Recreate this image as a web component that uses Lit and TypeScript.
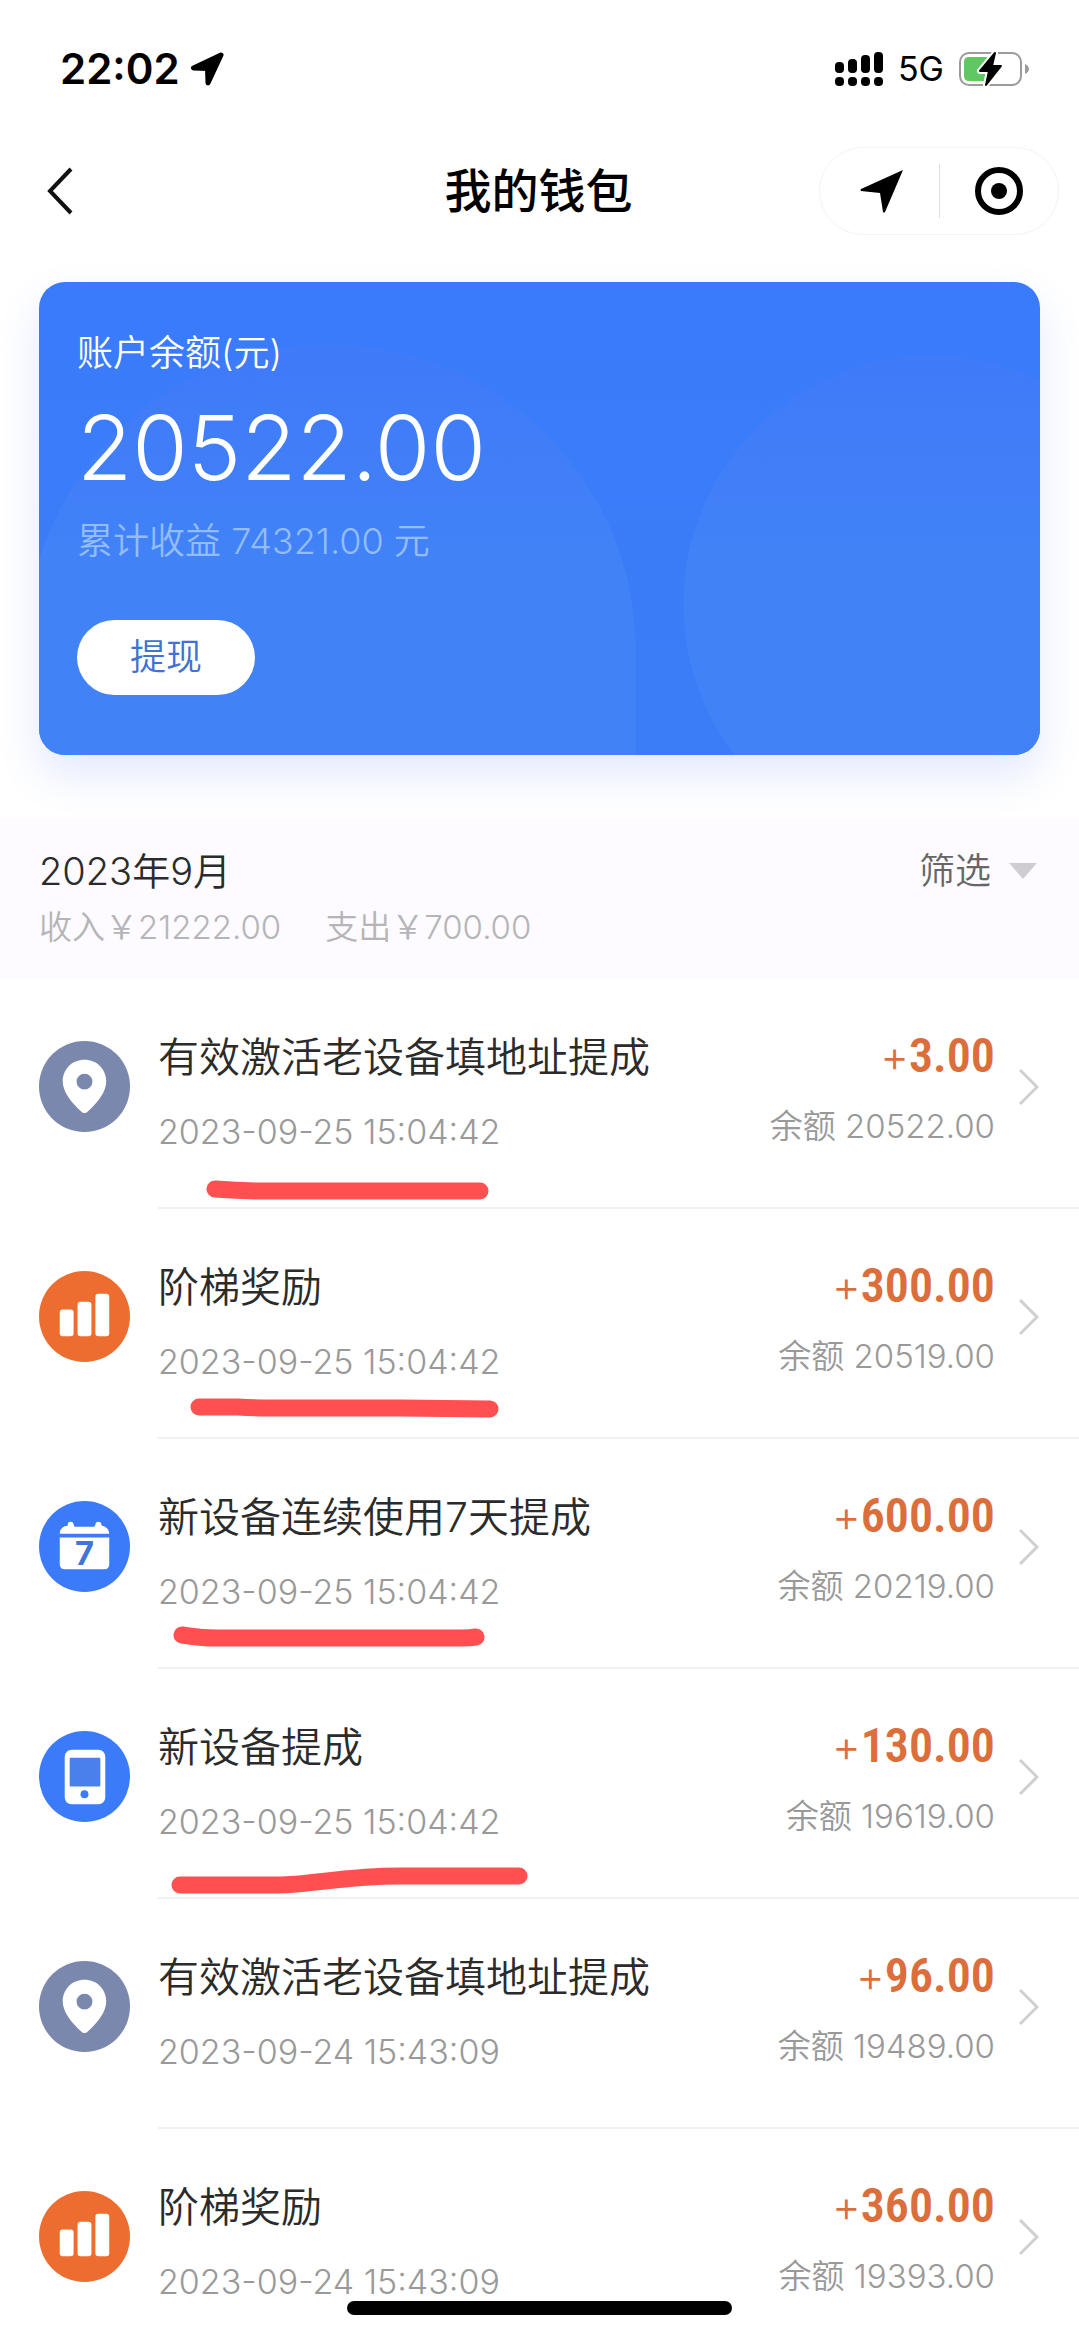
import { LitElement, html, css, svg, nothing } from "lit";
import { customElement, property } from "lit/decorators.js";

type Kind = "pin" | "bars" | "calendar" | "phone";

interface Entry {
  kind: Kind;
  title: string;
  time: string;
  amount: string;
  balance: string;
  mark?: string;
}

const ENTRIES: Entry[] = [
  { kind: "pin", title: "有效激活老设备填地址提成", time: "2023-09-25 15:04:42", amount: "3.00", balance: "20522.00", mark: "M215 210 Q240 212 262 212 L480 212" },
  { kind: "bars", title: "阶梯奖励", time: "2023-09-25 15:04:42", amount: "300.00", balance: "20519.00", mark: "M199 198 L238 198 Q255 199 285 199 L400 199 L490 200" },
  { kind: "calendar", title: "新设备连续使用7天提成", time: "2023-09-25 15:04:42", amount: "600.00", balance: "20219.00", mark: "M182 196 Q200 199 216 199 L462 199 Q470 199 476 198" },
  { kind: "phone", title: "新设备提成", time: "2023-09-25 15:04:42", amount: "130.00", balance: "19619.00", mark: "M180 216 L278 216 C310 216 345 207 400 207 L519 207" },
  { kind: "pin", title: "有效激活老设备填地址提成", time: "2023-09-24 15:43:09", amount: "96.00", balance: "19489.00" },
  { kind: "bars", title: "阶梯奖励", time: "2023-09-24 15:43:09", amount: "360.00", balance: "19393.00" },
];

@customElement("entry-icon")
export class EntryIcon extends LitElement {
  @property() kind: Kind = "pin";

  static styles = css`
    :host { display: block; flex: none; width: 91px; height: 91px; }
    .art { display: block; width: 100%; height: 100%; }
    .day { font: 700 33px "Inter", sans-serif; }
  `;

  private shape() {
    switch (this.kind) {
      case "pin":
        return svg`
          <circle cx="46" cy="46" r="46" fill="#7b88ad"></circle>
          <path fill="#fff" fill-rule="evenodd" d="M46 19 C58.500 19 68 28.500 68 41 C68 51 60 62 48.500 72 Q46 73.800 43.500 72 C32 62 24 51 24 41 C24 28.500 33.500 19 46 19 Z M46 33 A8 8 0 1 0 46 49 A8 8 0 1 0 46 33 Z"></path>`;
      case "bars":
        return svg`
          <circle cx="46" cy="46" r="46" fill="#ed6c30"></circle>
          <g fill="#fff">
            <rect x="21" y="39" width="14" height="27" rx="3"></rect>
            <rect x="39" y="31" width="14" height="35" rx="3"></rect>
            <rect x="57" y="23" width="14" height="43" rx="3"></rect>
          </g>`;
      case "calendar":
        return svg`
          <circle cx="46" cy="46" r="46" fill="#3b7bfa"></circle>
          <path fill="#fff" d="M21 33 C21 28 25 25 29 25 L29 24 Q29 21 32 21 Q35 21 35 24 L36 26 L56 26 L57 24 Q57 21 60 21 Q63 21 63 24 L64 25 C68 26 71 29 71 33 Z"></path>
          <path fill="#fff" d="M21 37 H71 V64 Q71 69 66 69 H26 Q21 69 21 64 Z"></path>
          <text class="day" x="46" y="65" text-anchor="middle" fill="#3f76d8">7</text>`;
      default:
        return svg`
          <circle cx="46" cy="46" r="46" fill="#3b7bfa"></circle>
          <rect x="26" y="19" width="41" height="55" rx="7" fill="#fff"></rect>
          <rect x="31" y="27" width="31" height="29" rx="1" fill="#4a80ec"></rect>
          <circle cx="46" cy="64" r="4" fill="#3b7bfa"></circle>`;
    }
  }

  render() {
    return html`<svg class="art" viewBox="0 0 92 92" aria-hidden="true">${this.shape()}</svg>`;
  }
}

@customElement("app-root")
export class AppRoot extends LitElement {
  static styles = css`
    :host {
      display: flex;
      flex-direction: column;
      height: 100vh;
      overflow: hidden;
      background: #fff;
      color: #2b2b2b;
      font-family: "Inter", "Noto Sans CJK SC", sans-serif;
      font-weight: 350;
    }
    * { box-sizing: border-box; }
    button { font: inherit; color: inherit; border: 0; background: none; padding: 0; }
    svg { display: block; flex: none; }
    p, h1, h2, ul { margin: 0; padding: 0; }

    .status { flex: none; display: flex; align-items: center; height: 138px; padding: 0 50px 0 60px; color: #000; }
    .clock { font-weight: 600; font-size: 42px; line-height: 48px; }
    .here { margin-left: 10px; }
    .signals { margin-left: auto; display: flex; align-items: center; gap: 15px; font-size: 34px; font-weight: 400; line-height: 40px; }

    .nav { flex: none; display: grid; grid-template-columns: 1fr auto 1fr; align-items: center; height: 106px; padding: 0 20px 0 18px; }
    .back { justify-self: start; margin-left: 28px; width: 48px; height: 64px; }
    .name { font-size: 47px; line-height: 64px; font-weight: 500; color: #000; }
    .capsule { justify-self: end; display: flex; align-items: center; width: 240px; height: 88px; border: 1px solid #f3f3f3; border-radius: 44px; }
    .tool { flex: 1; display: flex; justify-content: center; align-items: center; height: 54px; }
    .tool + .tool { border-left: 1px solid #dedede; }

    .card { position: relative; flex: none; margin: 38px 39px 0 39px; padding: 48px 38px 60px; border-radius: 26px; color: #fff; background: linear-gradient(#397bfb, #3b7df6); box-shadow: 0 20px 44px rgba(60, 100, 250, 0.14); }
    .waves { position: absolute; inset: 0; width: 100%; height: 100%; border-radius: 26px; }
    .inner { position: relative; display: flex; flex-direction: column; align-items: flex-start; }
    .label { font-size: 36px; line-height: 46px; }
    .total { font-size: 90px; line-height: 112px; margin-top: 16px; font-weight: 300; }
    .earned { font-size: 36px; line-height: 46px; margin-top: 14px; color: #93bcfa; }
    .withdraw { margin-top: 56px; width: 178px; height: 75px; border-radius: 38px; background: #fff; color: #3f72d2; font-size: 36px; line-height: 75px; }

    .month { flex: none; display: flex; align-items: flex-start; justify-content: space-between; margin-top: 63px; padding: 30px 42px 0 39px; height: 161px; background: #fdfbff; }
    .date { font-size: 38px; line-height: 46px; font-weight: 350; }
    .sums { display: flex; gap: 44px; margin-top: 10px; font-size: 33px; line-height: 46px; color: #b5b5b8; }
    .filter { display: flex; align-items: center; gap: 18px; font-size: 36px; line-height: 46px; color: #666; }

    .list { flex: 1; min-height: 0; overflow: hidden; list-style: none; }
    .row { position: relative; display: flex; height: 230px; padding-left: 39px; gap: 28px; color: inherit; text-decoration: none; }
    .icon { margin-top: 62px; }
    .body { flex: 1; display: flex; justify-content: space-between; padding: 49px 40px 0 0; border-bottom: 2px solid #f1f1f1; }
    .title { font-size: 41px; line-height: 58px; }
    .time { font-size: 34px; line-height: 46px; margin-top: 23px; color: #999; }
    .right { margin-left: auto; text-align: right; }
    .amount { font-family: "Roboto Condensed", "Liberation Sans Narrow", "Roboto", sans-serif; font-weight: 600; font-size: 48px; line-height: 56px; color: #dc6e3c; }
    .plus { font-family: "Inter", sans-serif; font-weight: 350; font-size: 44px; }
    .balance { font-size: 33px; line-height: 46px; margin-top: 19px; color: #999; }
    .go { margin: 40px 0 0 24px; }
    .mark { position: absolute; left: 0; top: 0; width: 100%; height: 100%; overflow: visible; fill: none; stroke: #ff4f50; stroke-width: 17px; stroke-linecap: round; stroke-linejoin: round; }

    .home { position: fixed; left: 0; right: 0; bottom: 22px; margin: 0 auto; width: 385px; height: 14px; border-radius: 7px; background: #000; }
  `;

  private row(e: Entry) {
    return html`
      <li>
        <a class="row" href="#">
          <entry-icon class="icon" .kind=${e.kind}></entry-icon>
          <div class="body">
            <div>
              <p class="title">${e.title}</p>
              <p class="time">${e.time}</p>
            </div>
            <div class="right">
              <p class="amount"><span class="plus">+</span>${e.amount}</p>
              <p class="balance">余额 ${e.balance}</p>
            </div>
            <svg class="go" width="20" height="38" viewBox="0 0 20 38" fill="none" stroke="#cfcfcf" stroke-width="3" aria-hidden="true"><path d="M1 2 L18 19 L1 36"></path></svg>
          </div>
          ${e.mark ? html`<svg class="mark" aria-hidden="true"><path d=${e.mark}></path></svg>` : nothing}
        </a>
      </li>`;
  }

  render() {
    return html`
      <div class="status">
        <span class="clock">22:02</span>
        <svg class="here" width="34" height="34" viewBox="0 0 34 34" aria-hidden="true"><path d="M31 3 L3.500 16 L17.500 16.500 L18 31 Z" fill="#000" stroke="#000" stroke-width="5" stroke-linejoin="round"></path></svg>
        <div class="signals">
          <svg width="48" height="36" viewBox="0 0 48 36" aria-hidden="true">
            <rect x="0" y="11" width="9" height="11" rx="4"></rect><rect x="13" y="8" width="9" height="14" rx="4"></rect>
            <rect x="26" y="4" width="9" height="18" rx="4"></rect><rect x="39" y="1" width="9" height="21" rx="4"></rect>
            <rect x="0" y="26" width="9" height="9" rx="4"></rect><rect x="13" y="26" width="9" height="9" rx="4"></rect>
            <rect x="26" y="26" width="9" height="9" rx="4"></rect><rect x="39" y="26" width="9" height="9" rx="4"></rect>
          </svg>
          <span>5G</span>
          <svg width="70" height="36" viewBox="0 0 70 36" aria-hidden="true">
            <rect x="1" y="2" width="61" height="32" rx="9" fill="none" stroke="#9b9b9b" stroke-width="2"></rect>
            <path d="M66 13 Q70 15 70 18 Q70 21 66 23 Z" fill="#9b9b9b"></path>
            <path d="M10 6 H34 V30 H10 Q5 30 5 25 V11 Q5 6 10 6 Z" fill="#5fc863"></path>
            <path d="M36 2 L21 20 H30 L27 34 L42 15 H33 Z" fill="#000" stroke="#fff" stroke-width="6" stroke-linejoin="round"></path>
            <path d="M36 2 L21 20 H30 L27 34 L42 15 H33 Z" fill="#000" stroke="#000" stroke-width="2" stroke-linejoin="round"></path>
          </svg>
        </div>
      </div>

      <header class="nav">
        <button class="back" aria-label="返回">
          <svg width="28" height="48" viewBox="0 0 28 48" fill="none" stroke="#111" stroke-width="4"><path d="M25 2 L4 24 L25 46"></path></svg>
        </button>
        <h1 class="name">我的钱包</h1>
        <div class="capsule">
          <button class="tool" aria-label="位置">
            <svg width="50" height="44" viewBox="-6 0 50 44"><path d="M43 1 L1 20 Q0 21 1 22 L20 24 L23 43 Q24 44 25 43 Z"></path></svg>
          </button>
          <button class="tool" aria-label="关闭">
            <svg width="48" height="48" viewBox="0 0 48 48"><circle cx="24" cy="24" r="21" fill="none" stroke="#000" stroke-width="6"></circle><circle cx="24" cy="24" r="8"></circle></svg>
          </button>
        </div>
      </header>

      <section class="card">
        <svg class="waves" viewBox="0 0 1002 473" preserveAspectRatio="xMidYMid slice" aria-hidden="true">
          <defs><linearGradient id="tint" gradientUnits="userSpaceOnUse" x1="0" y1="60" x2="0" y2="473"><stop offset="0" stop-color="#437af8" stop-opacity="0.6"></stop><stop offset="0.500" stop-color="#4182f7"></stop><stop offset="1" stop-color="#4183f7"></stop></linearGradient></defs>
          <path d="M-13 473 V368 A305 305 0 0 1 597 368 V473 Z" fill="url(#tint)"></path>
          <circle cx="893" cy="322" r="248" fill="url(#tint)"></circle>
        </svg>
        <div class="inner">
          <p class="label">账户余额(元)</p>
          <p class="total">20522.00</p>
          <p class="earned">累计收益 74321.00 元</p>
          <button class="withdraw">提现</button>
        </div>
      </section>

      <section class="month">
        <div>
          <h2 class="date">2023年9月</h2>
          <p class="sums"><span>收入￥21222.00</span><span>支出￥700.00</span></p>
        </div>
        <button class="filter">
          筛选
          <svg width="28" height="16" viewBox="0 0 28 16" aria-hidden="true"><path d="M0 0 H28 L14 16 Z" fill="#cfcdd1"></path></svg>
        </button>
      </section>

      <ul class="list">${ENTRIES.map((e) => this.row(e))}</ul>
      <div class="home"></div>
    `;
  }
}
